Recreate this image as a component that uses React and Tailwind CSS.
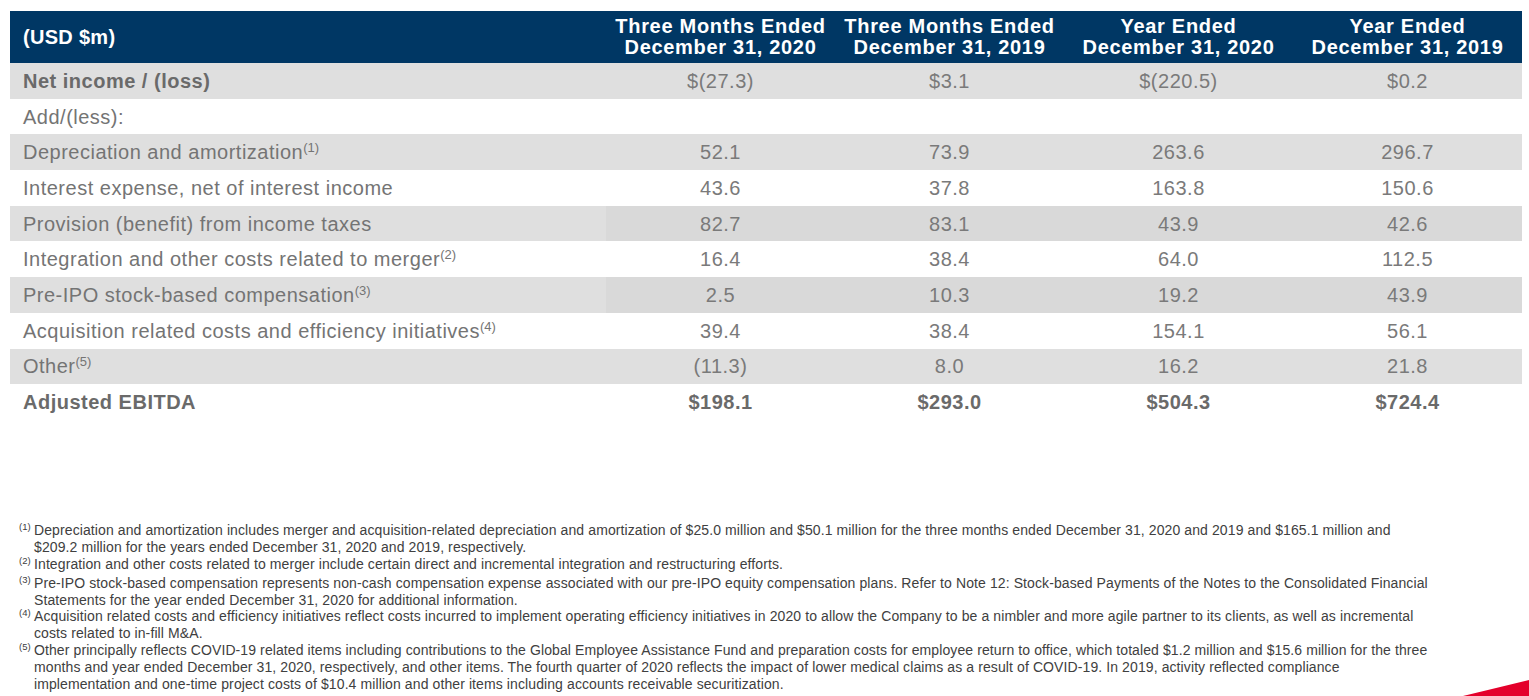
import React from "react";

const rows = [
  { label: "Net income / (loss)", bold: true, vals: ["$(27.3)", "$3.1", "$(220.5)", "$0.2"], bg: "grey" },
  { label: "Add/(less):", vals: ["", "", "", ""], bg: "white" },
  { label: "Depreciation and amortization", sup: "(1)", vals: ["52.1", "73.9", "263.6", "296.7"], bg: "grey" },
  { label: "Interest expense, net of interest income", vals: ["43.6", "37.8", "163.8", "150.6"], bg: "white" },
  { label: "Provision (benefit) from income taxes", vals: ["82.7", "83.1", "43.9", "42.6"], bg: "split" },
  { label: "Integration and other costs related to merger", sup: "(2)", vals: ["16.4", "38.4", "64.0", "112.5"], bg: "white" },
  { label: "Pre-IPO stock-based compensation", sup: "(3)", vals: ["2.5", "10.3", "19.2", "43.9"], bg: "split" },
  { label: "Acquisition related costs and efficiency initiatives", sup: "(4)", vals: ["39.4", "38.4", "154.1", "56.1"], bg: "white" },
  { label: "Other", sup: "(5)", vals: ["(11.3)", "8.0", "16.2", "21.8"], bg: "grey" },
  { label: "Adjusted EBITDA", bold: true, totals: true, vals: ["$198.1", "$293.0", "$504.3", "$724.4"], bg: "white" },
];

const headers = [
  ["Three Months Ended", "December 31, 2020"],
  ["Three Months Ended", "December 31, 2019"],
  ["Year Ended", "December 31, 2020"],
  ["Year Ended", "December 31, 2019"],
];

const notes = [
  {
    n: "(1)",
    lines: [
      "Depreciation and amortization includes merger and acquisition-related depreciation and amortization of $25.0 million and $50.1 million for the three months ended December 31, 2020 and 2019 and $165.1 million and",
      "$209.2 million for the years ended December 31, 2020 and 2019, respectively.",
    ],
  },
  {
    n: "(2)",
    lines: ["Integration and other costs related to merger include certain direct and incremental integration and restructuring efforts."],
  },
  {
    n: "(3)",
    lines: [
      "Pre-IPO stock-based compensation represents non-cash compensation expense associated with our pre-IPO equity compensation plans. Refer to Note 12: Stock-based Payments of the Notes to the Consolidated Financial",
      "Statements for the year ended December 31, 2020 for additional information.",
    ],
  },
  {
    n: "(4)",
    lines: [
      "Acquisition related costs and efficiency initiatives reflect costs incurred to implement operating efficiency initiatives in 2020 to allow the Company to be a nimbler and more agile partner to its clients, as well as incremental",
      "costs related to in-fill M&A.",
    ],
  },
  {
    n: "(5)",
    lines: [
      "Other principally reflects COVID-19 related items including contributions to the Global Employee Assistance Fund and preparation costs for employee return to office, which totaled $1.2 million and $15.6 million for the three",
      "months and year ended December 31, 2020, respectively, and other items. The fourth quarter of 2020 reflects the impact of lower medical claims as a result of COVID-19. In 2019, activity reflected compliance",
      "implementation and one-time project costs of $10.4 million and other items including accounts receivable securitization.",
    ],
  },
];

function Row({ r }) {
  const labelBg = r.bg === "white" ? "bg-white" : "bg-[#dfdfdf]";
  const valBg = r.bg === "white" ? "bg-white" : r.bg === "split" ? "bg-[#d9d9d9]" : "bg-[#dfdfdf]";
  return (
    <div className="flex h-[35.7px]">
      <div
        className={`w-[596px] flex items-center pl-[13px] text-[20px] tracking-[0.5px] whitespace-nowrap ${labelBg} ${
          r.bold ? "font-bold tracking-[0.3px] text-[#6a6a6a]" : "text-[#747474]"
        }`}
      >
        <span>
          {r.label}
          {r.sup && <sup className="text-[13px] tracking-normal top-[-0.55em]">{r.sup}</sup>}
        </span>
      </div>
      {r.vals.map((v, i) => (
        <div
          key={i}
          className={`w-[229px] flex items-center justify-center text-[20px] tracking-[0.5px] ${valBg} ${
            r.totals ? "font-bold tracking-[0.2px] text-[#6a6a6a]" : "text-[#7a7a7a]"
          }`}
        >
          {v}
        </div>
      ))}
    </div>
  );
}

export default function App() {
  return (
    <div
      className="relative w-[1529px] h-[696px] bg-white overflow-hidden"
      style={{ fontFamily: '"Liberation Sans", Arial, sans-serif' }}
    >
      <div className="pt-[11px] pl-[10px]">
        <div className="w-[1512px]">
          <div className="flex h-[52px] bg-[#003764] text-white font-bold">
            <div className="w-[596px] flex items-center pl-[13px] text-[20px] tracking-[0.3px]">(USD $m)</div>
            {headers.map((h, i) => (
              <div
                key={i}
                className="w-[229px] flex flex-col items-center justify-center text-[20px] leading-[21px] tracking-[0.7px] whitespace-nowrap"
              >
                <span>{h[0]}</span>
                <span>{h[1]}</span>
              </div>
            ))}
          </div>
          {rows.map((r, i) => (
            <Row key={i} r={r} />
          ))}
        </div>
      </div>

      <div className="mt-[102px] pl-[19px] text-[14px] leading-[16.9px] tracking-[0.1px] text-[#404040]">
        {notes.map((note, i) => (
          <div key={i} className="flex">
            <div className="w-[15px] shrink-0 tracking-normal">
              <span className="text-[9.5px] relative top-[-5px]">{note.n}</span>
            </div>
            <div>
              {note.lines.map((l, j) => (
                <div key={j} className="whitespace-nowrap">
                  {l}
                </div>
              ))}
            </div>
          </div>
        ))}
      </div>

      <svg className="absolute right-0 bottom-0" width="70" height="20" viewBox="0 0 70 20">
        <polygon points="4,20 70,4 70,20" fill="#e4002b" />
      </svg>
    </div>
  );
}
